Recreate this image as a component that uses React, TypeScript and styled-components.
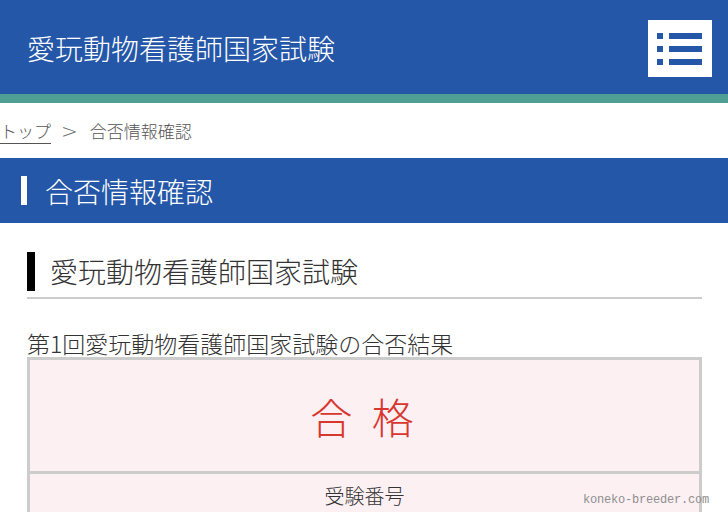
import styled, { createGlobalStyle } from 'styled-components';

const GlobalStyle = createGlobalStyle`
  html, body {
    margin: 0;
    padding: 0;
    background: #ffffff;
  }
  body {
    font-family: "Noto Sans CJK JP", "Noto Sans", sans-serif;
    color: #333333;
    overflow: hidden;
  }
`;

const BLUE = '#2557a8';

const Page = styled.div`
  position: relative;
  width: 728px;
  height: 512px;
  overflow: hidden;
`;

const Header = styled.header`
  height: 94px;
  display: flex;
  align-items: center;
  justify-content: space-between;
  padding: 0 16px 0 27px;
  box-sizing: border-box;
  background: ${BLUE};
`;

const SiteTitle = styled.h1`
  margin: 0;
  font-size: 28px;
  font-weight: 300;
  color: #ffffff;
  line-height: 1;
  padding-top: 2px;
`;

const MenuButton = styled.button`
  width: 64px;
  height: 57px;
  margin-top: 2px;
  border: none;
  padding: 0;
  background: #ffffff;
  display: flex;
  align-items: center;
  justify-content: center;
  cursor: pointer;
`;

const AccentStrip = styled.div`
  height: 9px;
  background: #4f9f95;
`;

const Breadcrumb = styled.nav`
  height: 55px;
  display: flex;
  align-items: center;
  font-size: 17px;
  font-weight: 300;
  color: #555555;
`;

const CrumbLink = styled.a`
  color: #555555;
  text-decoration: underline;
  text-underline-offset: 5px;
  padding-right: 4px;
`;

const CrumbSeparator = styled.span`
  font-family: "DejaVu Sans", sans-serif;
  font-weight: 200;
  font-size: 20px;
  color: #666666;
  margin: 0 12px 0 6px;
`;

const PageTitle = styled.div`
  height: 65px;
  display: flex;
  align-items: center;
  gap: 18px;
  padding-left: 21px;
  background: ${BLUE};
  color: #ffffff;
  font-size: 28px;
  font-weight: 300;
`;

const TitleMark = styled.span<{ $color: string; $w: number; $h: number }>`
  display: block;
  width: ${({ $w }) => $w}px;
  height: ${({ $h }) => $h}px;
  background: ${({ $color }) => $color};
  flex-shrink: 0;
`;

const Main = styled.main`
  padding: 29px 26px 0 27px;
`;

const SectionHeading = styled.h2`
  margin: 0;
  display: flex;
  align-items: center;
  gap: 15px;
  padding-bottom: 6px;
  border-bottom: 2px solid #cccccc;
  font-size: 28px;
  font-weight: 300;
  color: #333333;
  line-height: 39px;
`;

const ResultCaption = styled.p`
  margin: 30px 0 0;
  font-size: 23px;
  font-weight: 300;
  line-height: 28px;
  color: #333333;
`;

const ResultTable = styled.table`
  width: 675px;
  border-collapse: collapse;
  border: 3px solid #cccccc;
  background: #fcf0f3;
`;

const Cell = styled.td<{ $big?: boolean }>`
  border: 3px solid #cccccc;
  text-align: center;
  padding: 0;
  height: ${({ $big }) => ($big ? '111px' : '42px')};
  font-size: ${({ $big }) => ($big ? '42px' : '20px')};
  font-weight: 300;
  letter-spacing: ${({ $big }) => ($big ? '5px' : '0')};
  color: ${({ $big }) => ($big ? '#d8372e' : '#333333')};
  vertical-align: middle;
`;

const Watermark = styled.div`
  position: absolute;
  right: 19px;
  bottom: 5px;
  font-family: "Liberation Mono", "DejaVu Sans Mono", monospace;
  font-size: 12px;
  letter-spacing: -0.2px;
  color: #8f8f8f;
`;

const MenuIcon = () => (
  <svg width="46" height="34" viewBox="0 0 46 34">
    <g fill={BLUE}>
      <rect x="0" y="2" width="6" height="6" />
      <rect x="12" y="2" width="33" height="6" />
      <rect x="0" y="15" width="6" height="6" />
      <rect x="12" y="15" width="33" height="6" />
      <rect x="0" y="28" width="6" height="6" />
      <rect x="12" y="28" width="33" height="6" />
    </g>
  </svg>
);

export default function App() {
  return (
    <Page>
      <GlobalStyle />
      <Header>
        <SiteTitle>愛玩動物看護師国家試験</SiteTitle>
        <MenuButton aria-label="メニュー">
          <MenuIcon />
        </MenuButton>
      </Header>
      <AccentStrip />
      <Breadcrumb>
        <CrumbLink href="#">トップ</CrumbLink>
        <CrumbSeparator>&gt;</CrumbSeparator>
        <span>合否情報確認</span>
      </Breadcrumb>
      <PageTitle>
        <TitleMark $color="#ffffff" $w={6} $h={29} />
        合否情報確認
      </PageTitle>
      <Main>
        <SectionHeading>
          <TitleMark $color="#000000" $w={8} $h={39} />
          愛玩動物看護師国家試験
        </SectionHeading>
        <ResultCaption>第1回愛玩動物看護師国家試験の合否結果</ResultCaption>
        <ResultTable>
          <tbody>
            <tr>
              <Cell $big>合 格</Cell>
            </tr>
            <tr>
              <Cell>受験番号</Cell>
            </tr>
          </tbody>
        </ResultTable>
      </Main>
      <Watermark>koneko-breeder.com</Watermark>
    </Page>
  );
}
